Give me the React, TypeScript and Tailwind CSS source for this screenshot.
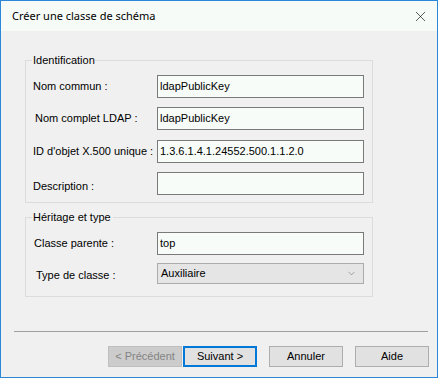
import { ChevronDown, X } from "lucide-react";

const ui = { fontFamily: '"Liberation Sans", Arial, sans-serif' };

function Field({ label, value, labelClass = "" }: { label: string; value?: string; labelClass?: string }) {
  return (
    <div className="flex items-center">
      <span className={`w-[124px] shrink-0 whitespace-nowrap text-[11px] text-black ${labelClass}`}>{label}</span>
      <div className="w-[207px] h-[23px] border border-[#7a7a7a] bg-[#f7fcf8] flex items-center pl-[2px] text-[11px] text-black">
        {value}
      </div>
    </div>
  );
}

function Group({ title, titleWidth, className, children }: { title: string; titleWidth: string; className: string; children: React.ReactNode }) {
  return (
    <div className={`relative ml-[24px] w-[348px] border border-[#dcdcdc] ${className}`}>
      <span className={`absolute -top-[8px] left-[6px] ${titleWidth} bg-[#f0f0f0] pl-[1px] text-[11px] leading-[14px] text-black whitespace-nowrap`}>
        {title}
      </span>
      {children}
    </div>
  );
}

function Button({ label, variant = "normal" }: { label: string; variant?: "normal" | "default" | "disabled" }) {
  const cls =
    variant === "disabled"
      ? "border border-[#bfbfbf] bg-[#cccccc] text-[#838383]"
      : variant === "default"
        ? "border-2 border-[#0078d7] bg-[#e1e1e1] text-black"
        : "border border-[#adadad] bg-[#e1e1e1] text-black";
  return (
    <div className={`w-[74px] h-[21px] flex items-center justify-center text-[11px] ${cls}`}>{label}</div>
  );
}

export default function App() {
  return (
    <div className="w-[439px] h-[378px] bg-white" style={ui}>
      <div className="w-[438px] h-[378px] border border-[#2b87d8] flex flex-col">
        {/* Title bar */}
        <div className="h-[30px] shrink-0 bg-[#f6fbf7] flex items-center justify-between pl-[11px] pr-[8px]">
          <span className="text-[11px] text-black" style={{ fontFamily: '"Noto Sans", sans-serif' }}>
            Créer une classe de schéma
          </span>
          <X size={17} strokeWidth={0.9} className="text-black" />
        </div>

        {/* Content */}
        <div className="flex-1 bg-[#f0f0f0] flex flex-col pt-[29px]">
          <Group title="Identification" titleWidth="w-[63px]" className="h-[143px] pt-[14px] pl-[7px]">
            <div className="flex flex-col">
              <Field label="Nom commun :" value="ldapPublicKey" />
              <div className="mt-[9px]">
                <Field label="Nom complet LDAP :" value="ldapPublicKey" labelClass="pl-[2px]" />
              </div>
              <div className="mt-[10px]">
                <Field label="ID d'objet X.500 unique :" value="1.3.6.1.4.1.24552.500.1.1.2.0" />
              </div>
              <div className="mt-[9px]">
                <Field label="Description :" labelClass="pt-[6px]" />
              </div>
            </div>
          </Group>

          <Group title="Héritage et type" titleWidth="w-[81px]" className="mt-[14px] h-[80px] pt-[14px] pl-[7px]">
            <Field label="Classe parente :" value="top" labelClass="pl-[1px]" />
            <div className="mt-[8px] flex items-center">
              <span className="w-[124px] shrink-0 pl-[3px] pt-[3px] text-[11px] text-black">Type de classe :</span>
              <div className="w-[207px] h-[21px] border border-[#acacac] bg-[#e5e5e5] flex items-center justify-between pl-[3px] pr-[6px] text-[11px] text-black">
                <span>Auxiliaire</span>
                <ChevronDown size={11} strokeWidth={1.1} className="text-[#606060]" />
              </div>
            </div>
          </Group>

          {/* Separator */}
          <div className="mt-[34px] ml-[13px] w-[414px] h-px bg-[#a0a0a0]" />

          {/* Buttons */}
          <div className="mt-[14px] ml-[107px] flex">
            <Button label="< Précédent" variant="disabled" />
            <div className="ml-[1px]">
              <Button label="Suivant >" variant="default" />
            </div>
            <div className="ml-[12px]">
              <Button label="Annuler" />
            </div>
            <div className="ml-[12px]">
              <Button label="Aide" />
            </div>
          </div>
        </div>
      </div>
    </div>
  );
}
